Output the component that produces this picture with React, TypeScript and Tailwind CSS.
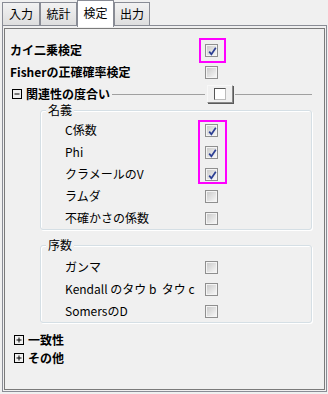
import type { ReactNode } from 'react';

const nominal = [
  { label: 'C係数', on: true },
  { label: 'Phi', on: true },
  { label: 'クラメールのV', on: true },
  { label: 'ラムダ', on: false },
  { label: '不確かさの係数', on: false },
];

const ordinal = ['ガンマ', 'Kendall のタウ b  タウ c', 'SomersのD'];

export default function App() {
  return (
    <div className="relative w-[328px] h-[394px] bg-[#f0f0f0] text-[12px] leading-none text-black font-['Noto_Sans_CJK_JP','Noto_Sans',sans-serif]">
      <div className="flex items-end h-[25px] pl-[2px]">
        <Tab width="w-[38px]">入力</Tab>
        <Tab width="w-[37px]">統計</Tab>
        <Tab width="w-[37px]" active>検定</Tab>
        <Tab width="w-[36px]">出力</Tab>
      </div>

      {/* pane */}
      <div className="ml-[2px] w-[325px] h-[367px] border border-[#898c95] pt-[2px] px-px pb-px">
        <div className="h-full border border-[#7a7a7a] bg-[#f0f0f0] pt-[10px]">
          <HeadRow label="カイ二乗検定" on />
          <HeadRow label="Fisherの正確確率検定" />

          <div className="flex items-center h-[22px] pl-[5px] mr-[12px]">
            <div className="flex items-center w-[197px]">
              <Expander open />
              <span className="ml-[4px] font-bold">関連性の度合い</span>
              <div className="flex-1 h-px bg-[#a0a0a0] ml-[2px] mr-[2px]" />
            </div>
            <div className="w-[26px] h-[18px] flex items-center pl-[6px] bg-[#f0f0f0] border border-t-[#f8f8f8] border-l-[#f8f8f8] border-r-[#8a8a8a] border-b-[#8a8a8a] shadow-[1px_1px_0_#5a5a5a]">
              <span className="w-[12px] h-[12px] bg-white border border-[#555] border-r-[#bbb] border-b-[#bbb]" />
            </div>
            <div className="flex-1 h-px bg-[#a0a0a0] ml-[2px]" />
          </div>

          <Group title="名義" className="mt-[5px] pt-[8px]">
            {nominal.map((n) => (
              <ItemRow key={n.label} label={n.label} on={n.on} />
            ))}
          </Group>

          <Group title="序数" className="mt-[15px] pt-[10px]">
            {ordinal.map((o) => (
              <ItemRow key={o} label={o} />
            ))}
          </Group>

          <div className="mt-[8px]">
            <div className="flex items-center h-[18px] pl-[7px]">
              <Expander />
              <span className="ml-[4px] font-bold">一致性</span>
            </div>
            <div className="flex items-center h-[18px] pl-[7px]">
              <Expander />
              <span className="ml-[4px] font-bold">その他</span>
            </div>
          </div>
        </div>
      </div>

      {/* highlight annotations */}
      <div className="absolute left-[199px] top-[38px] w-[27px] h-[25px] border-2 border-[#ff00ff]" />
      <div className="absolute left-[198px] top-[120px] w-[29px] h-[64px] border-2 border-[#ff00ff]" />
    </div>
  );
}

function Tab({ children, width, active }: { children: ReactNode; width: string; active?: boolean }) {
  if (active) {
    return (
      <div
        className={`${width} h-[27px] -mb-[2px] relative z-10 flex items-center justify-center pb-[2px] bg-white border border-b-0 border-[#898c95]`}
      >
        {children}
      </div>
    );
  }
  return (
    <div
      className={`${width} h-[23px] flex items-center justify-center bg-linear-to-b from-[#f2f2f2] to-[#dedede] border border-b-0 border-[#898c95]`}
    >
      {children}
    </div>
  );
}

function HeadRow({ label, on }: { label: string; on?: boolean }) {
  return (
    <div className="flex items-center h-[22px] pl-[5px]">
      <span className="w-[195px] font-bold">{label}</span>
      <Check on={on} />
    </div>
  );
}

function Group({ title, className, children }: { title: string; className: string; children: ReactNode }) {
  return (
    <div
      className={`relative ml-[35px] mr-[12px] rounded-[3px] border border-[#d5dfe5] shadow-[inset_1px_1px_0_#ffffff,1px_1px_0_#ffffff] ${className}`}
    >
      <span className="absolute -top-[8px] left-[5px] px-[2px] bg-[#f0f0f0] leading-[14px]">{title}</span>
      {children}
    </div>
  );
}

function ItemRow({ label, on }: { label: string; on?: boolean }) {
  return (
    <div className="flex items-center h-[22px] pl-[24px]">
      <span className="w-[140px] whitespace-pre">{label}</span>
      <Check on={on} />
    </div>
  );
}

function Expander({ open }: { open?: boolean }) {
  return (
    <svg width="10" height="10" viewBox="0 0 10 10" className="ml-[2px] shrink-0">
      <rect x="0.5" y="0.5" width="9" height="9" fill="none" stroke="#000" />
      <line x1="2.5" y1="5" x2="7.5" y2="5" stroke="#000" />
      {!open && <line x1="5" y1="2.5" x2="5" y2="7.5" stroke="#000" />}
    </svg>
  );
}

function Check({ on }: { on?: boolean }) {
  return (
    <span className="flex w-[13px] h-[13px] shrink-0 border border-[#8f8f8f] bg-[#f4f4f4] p-px">
      <span className="relative flex-1 bg-linear-to-br from-[#cbcbcb] to-[#f6f6f6]">
        {on && (
          <svg width="11" height="11" viewBox="0 0 11 11" className="absolute inset-0">
            <path d="M2.2 5.6 L4.4 8.3 L8.8 1.8" fill="none" stroke="#2c3f94" strokeWidth="1.7" />
          </svg>
        )}
      </span>
    </span>
  );
}
